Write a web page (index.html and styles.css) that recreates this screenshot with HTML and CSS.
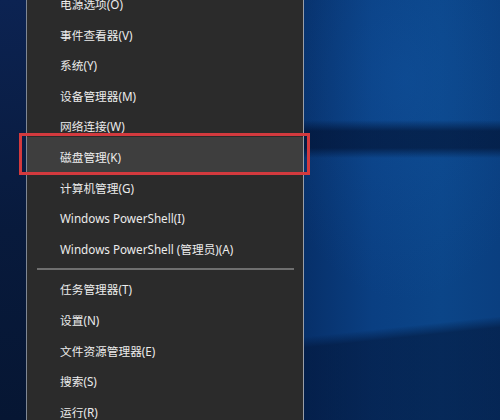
FILE: index.html
```html
<!DOCTYPE html>
<html lang="zh-CN">
<head>
<meta charset="utf-8">
<title>Win+X 菜单</title>
<link rel="stylesheet" href="styles.css">
</head>
<body>
<div class="screen">
  <div class="edge"></div>
  <nav class="menu">
    <ul class="list">
      <li class="item">电源选项(O)</li>
      <li class="item">事件查看器(V)</li>
      <li class="item">系统(Y)</li>
      <li class="item">设备管理器(M)</li>
      <li class="item">网络连接(W)</li>
      <li class="item selected">磁盘管理(K)</li>
      <li class="item">计算机管理(G)</li>
      <li class="item">Windows PowerShell(I)</li>
      <li class="item">Windows PowerShell (管理员)(A)</li>
      <li class="sep"></li>
      <li class="item">任务管理器(T)</li>
      <li class="item">设置(N)</li>
      <li class="item">文件资源管理器(E)</li>
      <li class="item">搜索(S)</li>
      <li class="item">运行(R)</li>
    </ul>
  </nav>
  <div class="desktop"></div>
</div>
</body>
</html>
```

FILE: styles.css
```css
html, body {
  margin: 0;
  padding: 0;
  width: 500px;
  height: 420px;
  overflow: hidden;
  background: #0a3a78;
}

.screen {
  display: flex;
  width: 500px;
  height: 420px;
  overflow: hidden;
}

.edge {
  width: 26px;
  flex: none;
  background: linear-gradient(180deg, #0c2352 0%, #081a3c 55%, #061633 100%);
}

.menu {
  width: 276px;
  flex: none;
  background: #2b2b2b;
  border-left: 1px solid #7f8794;
  border-right: 1px solid #9a9ea6;
  position: relative;
  z-index: 1;
}

.list {
  list-style: none;
  margin: -11.8px 0 0 0;
  padding: 0;
}

.item {
  height: 30.6px;
  display: flex;
  align-items: center;
  padding-left: 33px;
  color: #ececec;
  font-family: "Noto Sans", "Noto Sans CJK SC", sans-serif;
  font-size: 11.7px;
  white-space: nowrap;
  position: relative;
}

.item.selected::before {
  content: "";
  position: absolute;
  left: 0;
  right: 0;
  top: -4px;
  bottom: 0;
  background: #3e3e3e;
  z-index: -1;
}

.item.selected {
  z-index: 1;
}

.item.selected::after {
  content: "";
  position: absolute;
  left: -8px;
  right: -7px;
  top: -8px;
  bottom: -3px;
  border: 3px solid #d33a3e;
  box-sizing: border-box;
}

.sep {
  height: 10px;
  display: flex;
  align-items: center;
  padding: 0 9px 0 10px;
}

.sep::before {
  content: "";
  flex: 1;
  height: 2px;
  background: #6f6f6f;
}

.desktop {
  flex: 1;
  background:
    linear-gradient(180deg, rgba(0, 10, 35, 0) 120px, rgba(0, 12, 40, 0.6) 131px, rgba(0, 12, 40, 0.6) 148px, rgba(0, 10, 35, 0) 158px),
    linear-gradient(174deg, rgba(2, 18, 50, 0) 335px, rgba(2, 18, 50, 0.55) 346px),
    radial-gradient(ellipse 140px 220px at 100px 80px, rgba(20, 90, 170, 0.35), rgba(20, 90, 170, 0)),
    linear-gradient(90deg, #07306a 0%, #0a3f82 35%, #0b4588 70%, #0a3f80 100%);
}
```
